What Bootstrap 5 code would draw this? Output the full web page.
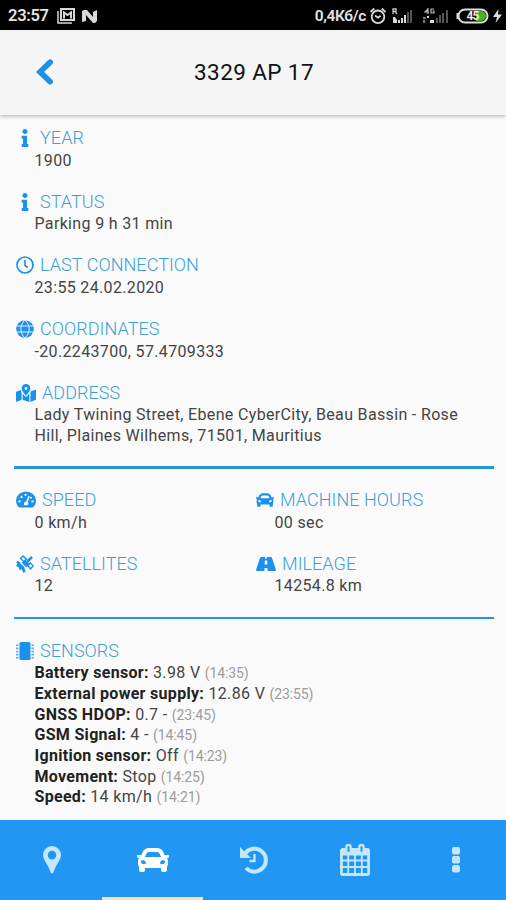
<!DOCTYPE html>
<html lang="en">
<head>
<meta charset="utf-8">
<meta name="viewport" content="width=device-width, initial-scale=1">
<title>3329 AP 17</title>
<link href="https://cdn.jsdelivr.net/npm/bootstrap@5.3.0/dist/css/bootstrap.min.css" rel="stylesheet">
<style>
body{font-family:Roboto,"Liberation Sans",sans-serif;background:#fafafa;color:#444;height:900px;overflow:hidden}
svg{display:block;flex:none;overflow:visible}
.statusbar{height:30px;background:#000;color:#e4e4e4;font-size:16.5px;font-weight:600;line-height:30px;padding:2px 4px 0 8px}
.clock{letter-spacing:-.3px;width:41px}
.rate{font-size:15.5px;letter-spacing:-.35px}
.gap-signal{margin-left:6px}
.gap-signal-2{margin-left:9px}
.topbar{height:85px;background:#f5f5f5;box-shadow:0 1px 4px rgba(0,0,0,.32);padding-left:35px;z-index:1}
.topbar h1{font-size:22.5px;font-weight:400;color:#111;letter-spacing:.4px;padding-right:53px}
.details{padding:12px 12px 0 14px}
.entry{margin-bottom:19.5px}
.caption{height:22px;font-size:18px;font-weight:300;line-height:22px;color:#3d9fd5;padding-left:2px;letter-spacing:.06px}
.caption svg{color:#1a91eb;margin-right:6px}
.caption .info-glyph{margin:0 11px 0 5px}
.value{font-size:16px;line-height:20.7px;padding:1.5px 14px 0 20.5px;letter-spacing:.34px}
.rule{height:2.5px;background:#2396d6;margin-bottom:20.5px}
.value b{font-weight:700;color:#222;letter-spacing:.3px}
.value small{font-size:14px;color:#9c9c9c;letter-spacing:-.1px}
.tabs{height:80px;background:#2196f3;color:#c5e7fd;padding-left:1px}
.tab-item.active{color:#fff;box-shadow:inset 0 -3px #ffe0b2}
</style>
<script src="https://cdn.jsdelivr.net/npm/bootstrap@5.3.0/dist/js/bootstrap.bundle.min.js"></script>
</head>
<body class="d-flex flex-column m-0">
<svg width="0" height="0" class="position-absolute">
<symbol id="i-info" viewBox="0 0 192 512"><path fill="currentColor" d="M20 424.229h20V279.771H20c-11.046 0-20-8.954-20-20V212c0-11.046 8.954-20 20-20h112c11.046 0 20 8.954 20 20v212.229h20c11.046 0 20 8.954 20 20V492c0 11.046-8.954 20-20 20H20c-11.046 0-20-8.954-20-20v-47.771c0-11.046 8.954-20 20-20zM96 0C56.235 0 24 32.235 24 72s32.235 72 72 72 72-32.235 72-72S135.764 0 96 0z"/></symbol>
<symbol id="i-car" viewBox="0 0 512 512"><path fill="currentColor" d="M499.99 176h-59.87l-16.64-41.6C406.38 91.63 365.57 64 319.5 64h-127c-46.06 0-86.88 27.63-103.99 70.4L71.87 176H12.01C4.2 176-1.53 183.34.37 190.91l6 24C7.7 220.25 12.5 224 18.01 224h20.07C24.65 235.73 16 252.78 16 272v48c0 16.12 6.16 30.67 16 41.93V416c0 17.67 14.33 32 32 32h32c17.67 0 32-14.33 32-32v-32h256v32c0 17.67 14.33 32 32 32h32c17.67 0 32-14.33 32-32v-54.07c9.84-11.25 16-25.8 16-41.93v-48c0-19.22-8.65-36.27-22.07-48H494c5.51 0 10.31-3.75 11.64-9.09l6-24c1.89-7.57-3.84-14.91-11.65-14.91zm-352.06-17.83c7.29-18.22 24.94-30.17 44.57-30.17h127c19.63 0 37.28 11.95 44.57 30.17L384 208H128l19.93-49.83zM96 319.8c-19.2 0-32-12.76-32-31.9S76.8 256 96 256s48 28.71 48 47.85-28.8 15.95-48 15.95zm320 0c-19.2 0-48 3.19-48-15.95S396.8 256 416 256s32 12.76 32 31.9-12.8 31.9-32 31.9z"/></symbol>
</svg>

<header class="statusbar d-flex align-items-center">
  <span class="clock">23:57</span>
  <svg class="ms-2" width="18" height="16" viewBox="0 0 18 16" fill="none" stroke="#d8d8d8"><path d="M1 3v12h14" stroke-width="1.5"/><rect x="4" y="1" width="13" height="11" stroke-width="2"/><path d="M7 10.500V4.500l3.500 2.500L14 4.500v6" stroke-width="2"/></svg>
  <svg style="margin-left:7px" width="15" height="13" viewBox="0 0 15 13"><path fill="#d8d8d8" d="M0 12V1l2-1h3l6 7V2l4-2v11l-2 2h-2L4 5v6z"/></svg>
  <span class="rate ms-auto">0,4Кб/с</span>
  <svg class="ms-1" width="16" height="16" viewBox="0 0 16 16" fill="none" stroke="#d8d8d8" stroke-width="1.800"><circle cx="8" cy="8.800" r="6.300"/><path d="M5 7.500l3 2.200 2.600-2M.5 4l3.800-3.500M15.500 4l-3.800-3.500"/></svg>
  <svg class="gap-signal" width="21" height="16" viewBox="0 0 21 16"><path fill="none" stroke="#c8c8c8" stroke-width="1.300" d="M1 6V1h3v2.500H1M3 3.500 5 6"/><path fill="#d8d8d8" d="M1 9h2l2 3v3H1zM6 12h2v3H6zM9 10h2v5H9z"/><path fill="#d8d8d8" d="M12 7h2v8h-2z"/><path fill="#555" d="M15 4h2v11h-2zM18 2h2v13h-2z"/></svg>
  <svg class="gap-signal-2" width="28" height="16" viewBox="0 0 28 16"><path fill="none" stroke="#bbb" stroke-width="1.200" d="M6 0v6M6 1 3 4h4M12 1H9v4h3V3h-1.500"/><path fill="#777" d="M1 9h3v2H1zM1 12h2v3H1z"/><path fill="#d8d8d8" d="M8 12h4v3H8zM5 8h2v2H5z"/><path fill="#555" d="M14 10h2v5h-2zM17 7h2v8h-2zM20 5h2v10h-2zM24 2h2v13h-2z"/></svg>
  <svg class="gap-signal" width="33" height="16" viewBox="0 0 33 16"><rect x="2.500" y="1.500" width="29" height="13" rx="6.500" fill="none" stroke="#ddd" stroke-width="2"/><path d="M1.500 5v6" stroke="#ddd" stroke-width="2"/><path fill="#42b618" d="M20 3h5a5 5 0 0 1 0 10h-5z"/><text x="10.500" y="12.300" font-size="12" font-weight="700" fill="#eee" textLength="13">45</text></svg>
  <svg class="ms-1" width="9" height="14" viewBox="0 0 9 14"><path fill="#ddd" d="M5.500 0 0 8h4l-1.500 6L9 5.500H5z"/></svg>
</header>

<nav class="topbar d-flex align-items-center position-relative">
  <svg width="20" height="28" viewBox="0 0 20 28"><path d="m15.500 2.500-11 10.500 11 10.500" fill="none" stroke="#1c91e8" stroke-width="6" stroke-linecap="round" stroke-linejoin="miter" transform="translate(.8 .8) scale(.93)"/></svg>
  <h1 class="flex-grow-1 text-center m-0">3329 AP 17</h1>
</nav>

<main class="details flex-grow-1">
  <section class="entry"><div class="caption d-flex align-items-center"><svg class="info-glyph" width="8" height="18"><use href="#i-info"/></svg>YEAR</div><div class="value">1900</div></section>
  <section class="entry"><div class="caption d-flex align-items-center"><svg class="info-glyph" width="8" height="18"><use href="#i-info"/></svg>STATUS</div><div class="value">Parking 9 h 31 min</div></section>
  <section class="entry"><div class="caption d-flex align-items-center"><svg width="18" height="18" viewBox="0 0 18 18" fill="none" stroke="currentColor"><circle cx="9" cy="9" r="8" stroke-width="1.700"/><path d="M9 4v5.500l2.800 2" stroke-width="1.600"/></svg>LAST CONNECTION</div><div class="value">23:55 24.02.2020</div></section>
  <section class="entry"><div class="caption d-flex align-items-center"><svg width="18" height="18" viewBox="0 0 18 18"><circle cx="9" cy="9" r="8.800" fill="currentColor"/><path d="M.5 6h17M.5 12h17M9 0C3.500 5 3.500 13 9 18M9 0c5.500 5 5.500 13 0 18" fill="none" stroke="#fafafa" stroke-width=".9"/></svg>COORDINATES</div><div class="value">-20.2243700, 57.4709333</div></section>
  <section class="entry"><div class="caption d-flex align-items-center"><svg width="20" height="18" viewBox="0 0 576 512"><path fill="currentColor" fill-rule="evenodd" d="M288 0c-70 0-126 56-126 126 0 56 82 156 114 193q12 14 24 0c32-37 114-137 114-193C414 56 358 0 288 0zm0 168a42 42 0 1 1 0-84 42 42 0 0 1 0 84zM20 216A32 32 0 0 0 0 246v250q0 20 22 11l138-59V252q-13-24-21-84zM288 360q-22 0-38-18-30-35-58-73v179l192 64V269q-28 38-58 73-16 18-38 18zM554 161 416 216v296l140-56a32 32 0 0 0 20-30V176q0-20-22-15z"/></svg>ADDRESS</div><div class="value">Lady Twining Street, Ebene CyberCity, Beau Bassin - Rose Hill, Plaines Wilhems, 71501, Mauritius</div></section>
  <div class="rule"></div>
  <div class="row g-0">
    <section class="col-6 entry"><div class="caption d-flex align-items-center"><svg width="20" height="16" viewBox="0 1 20 17" preserveAspectRatio="none"><path fill="currentColor" d="M2.500 17A10 10 0 1 1 17.500 17Q17 17.500 16 17.500H4Q3 17.500 2.500 17z"/><g fill="#fafafa"><circle cx="3.500" cy="11" r="1.200"/><circle cx="5.500" cy="6.200" r="1.200"/><circle cx="16.500" cy="11" r="1.200"/><circle cx="9.500" cy="4" r="1.200"/><circle cx="15" cy="7" r="1"/><path d="m12.500 5 1.200.4-1.900 6.300a2.500 2.500 0 0 1-.2 3.300H8.300a2.500 2.500 0 0 1 2-3.800z"/></g></svg>SPEED</div><div class="value">0 km/h</div></section>
    <section class="col-6 entry"><div class="caption d-flex align-items-center"><svg width="18" height="18"><use href="#i-car"/></svg>MACHINE HOURS</div><div class="value">00 sec</div></section>
    <section class="col-6 entry"><div class="caption d-flex align-items-center"><svg width="18" height="18" viewBox="0 0 18 18"><g fill="currentColor"><path d="m9 4.500 4.500 4.500-3.300 3.300-4.500-4.500z"/><path d="M1.500 8.500Q8 8 9.500 16.500L7.500 18 5.500 14 3.500 15.500 3 12.500 0 11z"/><path fill-rule="evenodd" d="M7 0 11.500 4 8 7.500 3.500 3.500zM7 2 5.600 3.500 8 5.700 9.400 4.200zM14.500 7 18 11l-3.500 4-4-4.500zM14.500 9l-1.800 1.800 1.900 2 1.700-2z"/><path d="m11 7 5-5M11.500 4.500l2 2M4 9 1 6.500" stroke="currentColor" stroke-width="2.500"/></g></svg>SATELLITES</div><div class="value">12</div></section>
    <section class="col-6 entry"><div class="caption d-flex align-items-center"><svg width="20" height="14" viewBox="0 0 20 14"><path fill="currentColor" fill-rule="evenodd" d="M5.200 0h3.900L9 1.500h2L10.900 0h3.900q.8 0 1.100.8l4 11.700q.3 1.500-1.200 1.500h-7l-.3-3H8.600l-.3 3h-7Q-.2 14 .1 12.500l4-11.700Q4.400 0 5.200 0zM8.900 3.500 8.600 7.500h2.800l-.3-4z"/></svg>MILEAGE</div><div class="value">14254.8 km</div></section>
  </div>
  <div class="rule"></div>
  <section><div class="caption d-flex align-items-center"><svg width="18" height="18" viewBox="0 0 18 18"><rect x="3.500" width="11" height="18" rx="1.500" fill="currentColor"/><path d="M1.300 2.500v14M16.700 2.500v14" stroke="currentColor" stroke-width="2.400" stroke-dasharray="1.600 1.500" opacity=".75"/></svg>SENSORS</div>
    <div class="value">
      <div><b>Battery sensor:</b> 3.98 V <small>(14:35)</small></div>
      <div><b>External power supply:</b> 12.86 V <small>(23:55)</small></div>
      <div><b>GNSS HDOP:</b> 0.7 - <small>(23:45)</small></div>
      <div><b>GSM Signal:</b> 4 - <small>(14:45)</small></div>
      <div><b>Ignition sensor:</b> Off <small>(14:23)</small></div>
      <div><b>Movement:</b> Stop <small>(14:25)</small></div>
      <div><b>Speed:</b> 14 km/h <small>(14:21)</small></div>
    </div></section>
</main>

<footer class="tabs d-flex flex-shrink-0">
  <div class="tab-item flex-fill w-100 d-flex align-items-center justify-content-center"><svg width="18" height="28" viewBox="0 0 18 28"><path fill="currentColor" fill-rule="evenodd" d="M9 0a9 9 0 0 0-9 9c0 5 5 9 7.500 17q1.500 3 3 0C13 18 18 14 18 9a9 9 0 0 0-9-9zm0 4.800a4.300 4.300 0 1 1 0 8.600 4.300 4.300 0 0 1 0-8.600z"/></svg></div>
  <div class="tab-item active flex-fill w-100 d-flex align-items-center justify-content-center"><svg width="32" height="32"><use href="#i-car"/></svg></div>
  <div class="tab-item flex-fill w-100 d-flex align-items-center justify-content-center"><svg width="28" height="28" viewBox="0 0 28 28"><path d="M5 7.500A11.500 11.500 0 1 1 6 22" fill="none" stroke="currentColor" stroke-width="4"/><path fill="currentColor" d="M0 1v11h11z"/><path d="M14.500 8v7H9.500" fill="none" stroke="currentColor" stroke-width="2.300"/></svg></div>
  <div class="tab-item flex-fill w-100 d-flex align-items-center justify-content-center"><svg width="30" height="32" viewBox="0 0 30 32"><path fill="currentColor" fill-rule="evenodd" d="M3 4h24q3 0 3 3v22q0 3-3 3H3q-3 0-3-3V7q0-3 3-3zM2.800 11.500v4h4.500v-4zm6.300 0v4h5v-4zm6.800 0v4h5v-4zm6.800 0v4h4.500v-4zM2.800 17.500v4.500h4.500v-4.500zm6.300 0v4.500h5v-4.500zm6.800 0v4.500h5v-4.500zm6.800 0v4.500h4.500v-4.500zM2.800 24v5h4.500v-5zm6.300 0v5h5v-5zm6.800 0v5h5v-5zm6.800 0v5h4.500v-5z"/><path d="M8.500 3v4M21.500 3v4" stroke="currentColor" stroke-width="6.500" stroke-linecap="round"/><path d="M8.500 3v4M21.500 3v4" stroke="#2196f3" stroke-width="2" stroke-linecap="round"/></svg></div>
  <div class="tab-item flex-fill w-100 d-flex align-items-center justify-content-center"><svg width="8" height="26" viewBox="0 0 8 26" fill="currentColor"><rect width="8" height="7.500" rx="2"/><rect y="9" width="8" height="7.500" rx="2"/><rect y="18" width="8" height="7.500" rx="2"/></svg></div>
</footer>
</body>
</html>
